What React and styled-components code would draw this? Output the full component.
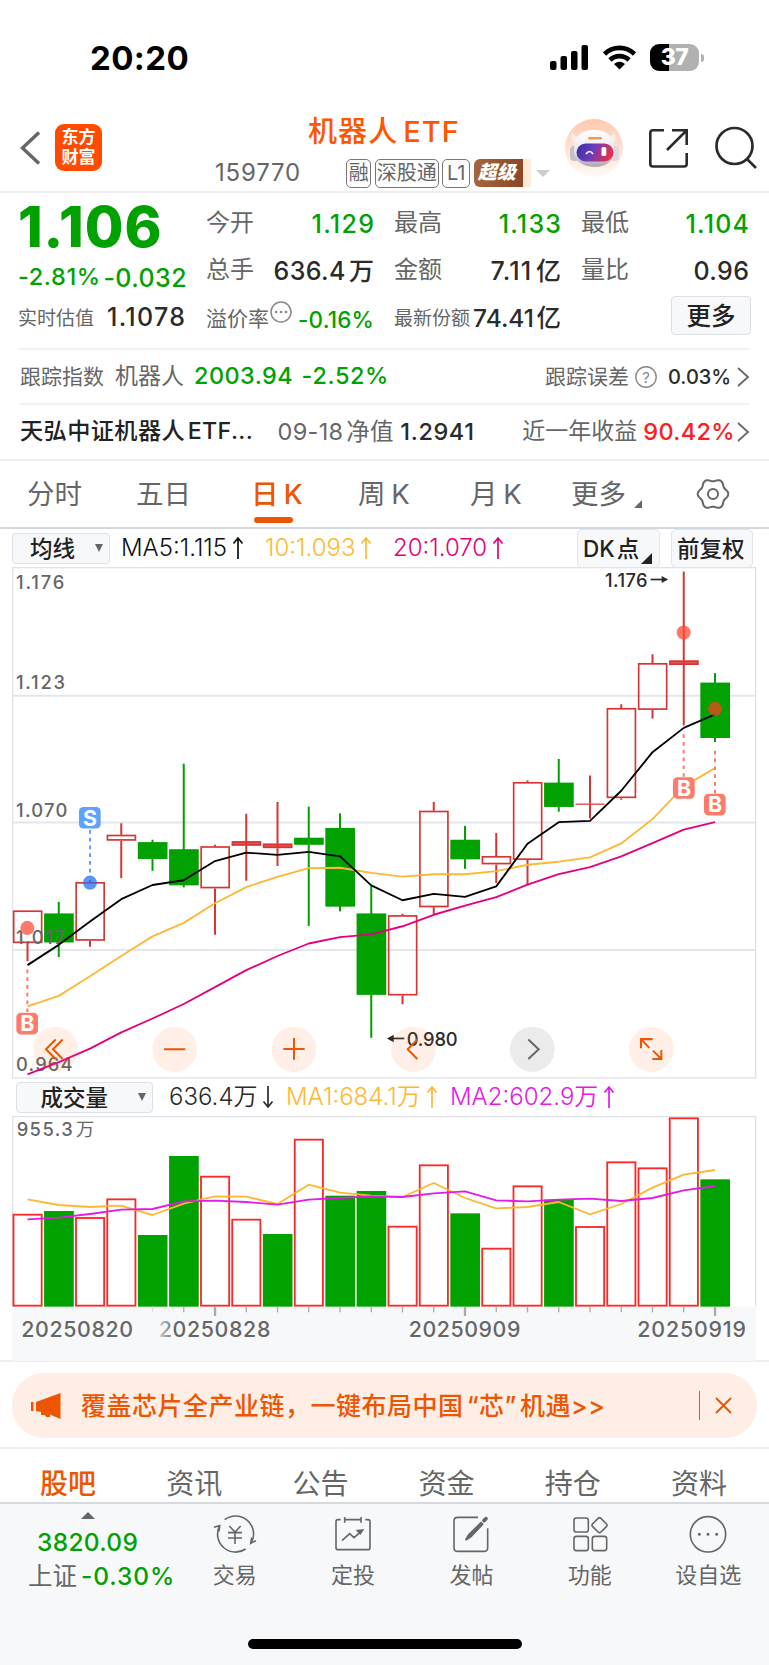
import styled, { createGlobalStyle } from "styled-components";

const GlobalStyle = createGlobalStyle`
  * { box-sizing: border-box; }
  body {
    margin: 0;
    background: #fff;
    font-family: Inter, "Noto Sans CJK SC", sans-serif;
    -webkit-font-smoothing: antialiased;
  }
  svg { display: block; flex: none; overflow: visible; }
`;

const GREEN = "#02a102";
const ORANGE = "#ee5500";
const GRAY = "#666";
const DARK = "#2b2b2b";

const Page = styled.div`
  width: 769px;
  height: 1665px;
  overflow: hidden;
`;
const Text = styled.span`
  flex: none;
  white-space: nowrap;
  line-height: 1.2;
  width: ${(p) => (p.$w ? `${p.$w}px` : "auto")};
  margin-left: ${(p) => p.$ml || 0}px;
  margin-right: ${(p) => -(p.$ls || 0)}px;
  margin-top: ${(p) => p.$mt || 0}px;
  font-size: ${(p) => p.$size || 24}px;
  font-weight: ${(p) => p.$weight || 400};
  letter-spacing: ${(p) => p.$ls || 0}px;
  word-spacing: -4px;
  color: ${(p) => p.$color || GRAY};
`;

/* status bar */
const StatusBar = styled.div`
  height: 100px;
  padding: 0 65px 0 90px;
  display: flex;
  align-items: center;
  justify-content: space-between;
`;
const Clock = styled.div`
  margin-top: 15px;
  font-size: 33px;
  font-weight: 700;
  letter-spacing: 0.4px;
`;
const StatusIcons = styled.div`
  margin-top: 15px;
  display: flex;
  align-items: center;
  gap: 14px;
`;
const Battery = styled.div`
  width: 49px;
  height: 27px;
  border-radius: 9px;
  background: linear-gradient(90deg, #000 38%, #b1b1b1 38%);
  color: #fff;
  font-size: 23px;
  font-weight: 800;
  line-height: 27px;
  text-align: center;
  letter-spacing: -0.5px;
`;
const BatteryGroup = styled.div`
  display: flex;
  align-items: center;
  gap: 2px;
`;
const Nub = styled.div`
  width: 3px;
  height: 8px;
  border-radius: 0 4px 4px 0;
  background: #b1b1b1;
`;

/* header */
const Header = styled.header`
  height: 93px;
  border-bottom: 2px solid #eee;
  display: flex;
  align-items: flex-start;
`;
const BackIcon = styled.svg`
  margin: 31px 0 0 20px;
`;
const Logo = styled.div`
  width: 47px;
  height: 47px;
  margin: 24px 0 0 14px;
  border-radius: 9px;
  background: #ff4a00;
  color: #fff;
  font-size: 17px;
  font-weight: 700;
  line-height: 19.5px;
  padding-top: 4px;
  text-align: center;
`;
const TitleBlock = styled.div`
  width: 462px;
`;
const Title = styled.h1`
  margin: 13px 0 0 206px;
  font-size: 29px;
  font-weight: 500;
  line-height: 38px;
  color: #ff5500;
  letter-spacing: 1.1px;
  word-spacing: -4px;
  white-space: nowrap;
`;
const CodeRow = styled.div`
  display: flex;
  align-items: center;
  margin: 7px 0 0 113px;
  height: 30px;
`;
const Tag = styled.span`
  width: ${(p) => p.$w}px;
  height: 29px;
  margin-right: 3.5px;
  border: 1.5px solid #777;
  border-radius: 5px;
  font-size: 20px;
  line-height: 26px;
  color: ${GRAY};
  text-align: center;
  white-space: nowrap;
  flex: none;
`;
const SuperTag = styled.span`
  width: 57px;
  height: 28px;
  border-radius: 6px 0 0 6px;
  background: linear-gradient(90deg, #a5663c, #8a4626 49px, #f9e6d0 49px, #fdeedd);
  color: #fff;
  font-size: 19px;
  font-style: italic;
  font-weight: 900;
  line-height: 28px;
  padding-left: 4px;
  white-space: nowrap;
  flex: none;
`;
const Caret = styled.i`
  width: 0;
  height: 0;
  margin-left: ${(p) => p.$ml || 0}px;
  border: ${(p) => p.$half}px solid transparent;
  border-top: ${(p) => p.$h}px solid ${(p) => p.$color};
  border-bottom: 0;
`;
const HeaderIcons = styled.div`
  display: flex;
  align-items: center;
  margin-top: 18px;
`;

/* quote summary */
const Summary = styled.section`
  display: flex;
  height: 157px;
  margin: 0 20px 0 19px;
  border-bottom: 2px solid #f2f2f2;
`;
const Main = styled.div`
  width: 187px;
`;
const Price = styled.div`
  height: 63px;
  margin-left: -1px;
  font-size: 56px;
  font-weight: 800;
  line-height: 68px;
  letter-spacing: 0.9px;
  color: ${GREEN};
`;
const Line = styled.div`
  display: flex;
  align-items: center;
  height: ${(p) => p.$h}px;
`;
const Stats = styled.div`
  display: grid;
  grid-template-columns: 168px 167px 168px;
  grid-template-rows: 47px 47px 50px;
  column-gap: 20px;
  padding-top: 7px;
`;
const Stat = styled.div`
  display: flex;
  align-items: center;
  justify-content: space-between;
`;
const HintIcon = styled.svg`
  margin: 0 5px 0 0;
`;
const MoreButton = styled.button`
  width: 80px;
  height: 39px;
  margin: -8px -2px 0 auto;
  flex: none;
  border: 1.5px solid #dcdfe6;
  border-radius: 4px;
  background: #f7f8fa;
  color: #222;
  font: 500 24.5px "Noto Sans CJK SC", sans-serif;
  line-height: 34px;
  padding: 0;
`;
const InfoRow = styled.section`
  display: flex;
  align-items: center;
  height: ${(p) => p.$h}px;
  margin: 0 20px;
  border-bottom: ${(p) => (p.$last ? "none" : "2px solid #f2f2f2")};
`;
const Spacer = styled.div`
  flex: 1;
`;

/* period tabs */
const Tabs = styled.nav`
  display: flex;
  height: 70px;
  border-top: 2px solid #eee;
  border-bottom: 2px solid #d3d6dd;
`;
const Tab = styled.div`
  position: relative;
  flex: none;
  width: ${(p) => p.$w}px;
  padding-left: ${(p) => p.$pl || 0}px;
  font-size: 27.5px;
  line-height: 67px;
  word-spacing: -2px;
  font-weight: ${(p) => (p.$active ? 500 : 400)};
  color: ${(p) => (p.$active ? ORANGE : GRAY)};
  white-space: nowrap;
  &::after {
    content: "";
    display: ${(p) => (p.$active ? "block" : "none")};
    position: absolute;
    left: 3px;
    bottom: 4px;
    width: 39px;
    height: 6px;
    border-radius: 3px;
    background: ${ORANGE};
  }
`;
const Corner = styled.i`
  display: inline-block;
  width: 0;
  height: 0;
  margin-left: ${(p) => p.$ml}px;
  margin-top: ${(p) => p.$mt || 0}px;
  vertical-align: ${(p) => p.$drop || 0}px;
  border-left: ${(p) => p.$s}px solid transparent;
  border-bottom: ${(p) => p.$s}px solid ${(p) => p.$color};
`;

/* indicator bars */
const Toolbar = styled.div`
  display: flex;
  align-items: center;
  height: 38px;
  padding-left: ${(p) => p.$pl}px;
`;
const Select = styled.div`
  display: flex;
  align-items: center;
  justify-content: flex-end;
  flex: none;
  width: ${(p) => p.$w}px;
  height: 31px;
  padding-right: 6px;
  border: 1.5px solid #dde0e6;
  border-radius: 4px;
  background: #f7f8fa;
`;
const Indicator = styled.div`
  display: flex;
  align-items: center;
  gap: 6px;
  flex: none;
  width: ${(p) => p.$w}px;
  margin-left: ${(p) => p.$ml || 0}px;
  font-size: 24px;
  font-weight: 350;
  line-height: 30px;
  white-space: nowrap;
  color: ${(p) => p.$color};
`;
const ToggleButton = styled.div`
  flex: none;
  display: flex;
  align-items: center;
  width: ${(p) => p.$w}px;
  height: 39px;
  margin-left: ${(p) => p.$ml}px;
  padding-left: 5px;
  border: 1.5px solid #e2e4ea;
  border-radius: 5px;
  background: #f7f8fa;
`;
const PlotBox = styled.div`
  margin-left: 12px;
`;

/* banner */
const BannerWrap = styled.div`
  height: 89px;
  padding: 11px 12px 0;
  border-top: 2px solid #eee;
  border-bottom: 2px solid #eee;
`;
const Banner = styled.div`
  display: flex;
  align-items: center;
  height: 65px;
  border-radius: 32px;
  background: #feeee5;
  padding: 0 25px 0 18px;
`;
const Divider = styled.div`
  width: 1.5px;
  height: 29px;
  margin-right: 15px;
  background: ${ORANGE};
`;

/* section tabs and bottom bar */
const SectionTabs = styled.nav`
  display: flex;
  height: 55px;
  padding: 0 7px 0 5px;
  border-bottom: 2px solid #d6d9de;
`;
const SectionTab = styled.div`
  flex: 1;
  text-align: center;
  font-size: 28px;
  line-height: 71px;
  font-weight: ${(p) => (p.$active ? 500 : 400)};
  color: ${(p) => (p.$active ? ORANGE : GRAY)};
`;
const BottomBar = styled.footer`
  height: 161px;
  background: #f7f8fa;
  display: flex;
  flex-direction: column;
  align-items: center;
`;
const BottomRow = styled.div`
  display: flex;
  align-self: stretch;
  height: 135px;
`;
const IndexBox = styled.div`
  width: 175.5px;
  display: flex;
  flex-direction: column;
`;
const UpMark = styled.i`
  width: 0;
  margin: 8px 0 9px 81px;
  border: 7px solid transparent;
  border-bottom: 7px solid ${GRAY};
  border-top: 0;
`;
const NavItem = styled.div`
  width: 118.4px;
  display: flex;
  flex-direction: column;
  align-items: center;
  padding-top: 10px;
  gap: 6px;
  font-size: 22px;
  line-height: 30px;
  color: ${GRAY};
`;
const HomeIndicator = styled.div`
  width: 274px;
  height: 10px;
  border-radius: 5px;
  background: #000;
`;

// candle: [high, bodyTop, bodyBottom, low, rising]
const CANDLES = [
  [1037, 1037, 1134, 1187, 1], [1012, 1046, 1132, 1175, 0], [948, 953, 1127, 1145, 1],
  [779, 813, 831, 941, 1], [828, 835, 885, 920, 0], [603, 856, 963, 969, 0],
  [843, 847, 972, 1109, 1], [751, 832, 846, 949, 1], [716, 839, 853, 906, 1],
  [730, 822, 843, 1083, 0], [750, 793, 1026, 1040, 0], [963, 1046, 1287, 1414, 0],
  [1047, 1051, 1289, 1315, 1], [716, 742, 1028, 1048, 1], [787, 828, 886, 914, 0],
  [808, 876, 901, 956, 1], [653, 657, 888, 961, 1], [589, 659, 731, 745, 0],
  [638, 720, 725, 765, 1], [427, 438, 705, 710, 1], [279, 305, 444, 469, 1],
  [34, 297, 311, 490, 1], [335, 363, 527, 539, 0],
];
const MA5 = [1199, 1139, 1070, 1004, 962, 948, 891, 866, 873, 864, 877, 963, 1007, 988, 997, 966, 840, 776, 772, 683, 569, 497, 457];
const MA10 = [1321, 1290, 1232, 1172, 1114, 1074, 1016, 968, 938, 912, 911, 926, 937, 930, 930, 921, 902, 893, 880, 839, 767, 670, 616];
const MA20 = [1522, 1486, 1446, 1398, 1357, 1314, 1264, 1214, 1172, 1135, 1116, 1108, 1084, 1050, 1023, 998, 961, 930, 909, 877, 838, 798, 776];
const VOLUMES = [431, 423, 441, 385, 495, 258, 317, 446, 492, 206, 377, 363, 467, 283, 430, 533, 346, 389, 468, 274, 292, 142, 328];
const FALLING_VOLUMES = [1, 4, 5, 8, 10, 11, 14, 17, 22];
const VMA1 = [388, 405, 411, 407, 435, 401, 379, 380, 402, 344, 368, 377, 381, 339, 384, 415, 411, 396, 433, 402, 353, 314, 300];
const VMA2 = [448, 443, 432, 419, 417, 394, 392, 396, 404, 389, 384, 379, 381, 370, 364, 391, 394, 389, 386, 393, 384, 361, 348];

const cx = (i) => 82.5 + i * 93.75;
const points = (list) => list.map((y, i) => `${cx(i)},${y}`).join(" ");

function Label({ x, y, w, size = 55, color = GRAY, weight = 500, children }) {
  return (
    <text x={x} y={y} textLength={w} fontSize={size} fill={color} fontWeight={weight}>
      {children}
    </text>
  );
}

function Candle({ i, data }) {
  const [high, top, bottom, low, rising] = data;
  const x = cx(i);
  if (!rising) {
    return (
      <g fill={GREEN}>
        <rect x={x - 3} y={high} width="6" height={low - high} />
        <rect x={x - 44} y={top} width="89" height={bottom - top} />
      </g>
    );
  }
  const thin = bottom - top < 16;
  return (
    <g stroke="#d93434" strokeWidth="5" fill="none">
      <path d={`M${x} ${high}V${top}M${x} ${bottom}V${low}`} strokeWidth="6" />
      <rect
        x={x - 41.5}
        y={top + 2.5}
        width="84"
        height={Math.max(bottom - top - 5, 0.5)}
        fill={thin ? "#dd5555" : "none"}
        strokeWidth={bottom - top < 6 ? 3 : 5}
      />
      {thin && <path d={`M${x} ${top}V${bottom}`} />}
    </g>
  );
}

function Marker({ x, y, color, letter }) {
  return (
    <g>
      <rect x={x - 33} y={y - 32} width="65" height="64" rx="13" fill={color} />
      <text x={x} y={y + 23} fontSize="64" fontWeight="700" fill="#fff" textAnchor="middle">
        {letter}
      </text>
    </g>
  );
}

function CandleChart() {
  const red = "#ff7a68";
  const blue = "#5ea2fb";
  return (
    <svg width="744" height="511" viewBox="36 21 2232 1512" preserveAspectRatio="none">
      <rect x="38" y="23" width="2229" height="1510" fill="none" stroke="#dfe2e6" strokeWidth="4" />
      <path d="M38 402H2267M38 777H2267M38 1154H2267" stroke="#e2e6ed" strokeWidth="6" />
      {CANDLES.map((data, i) => (
        <Candle key={i} i={i} data={data} />
      ))}
      <Label x="48" y="85" w="145">1.176</Label>
      <Label x="48" y="382" w="147">1.123</Label>
      <Label x="48" y="760" w="154">1.070</Label>
      <Label x="48" y="1136" w="146">1.017</Label>
      <Label x="48" y="1512" w="170">0.964</Label>
      <g fill="none" strokeWidth="5.5" strokeLinejoin="round">
        <polyline points={points(MA20)} stroke="#e2007f" />
        <polyline points={points(MA10)} stroke="#fdb833" />
        <polyline points={points(MA5)} stroke="#000" />
      </g>
      <g strokeWidth="6" strokeDasharray="11 12">
        <path d="M270 799V930" stroke={blue} />
        <path d="M82 1212V1338M2051 516V642M2145 565V692" stroke={red} />
      </g>
      <circle cx="270" cy="955" r="21" fill="#2672f0" fillOpacity=".75" />
      <circle cx="82" cy="1089" r="21" fill="#ff7a68" />
      <circle cx="2051" cy="215" r="21" fill="#ff4a38" fillOpacity=".75" />
      <circle cx="2145" cy="441" r="21" fill="#ed4620" fillOpacity=".75" />
      <Marker x={270} y={763} color={blue} letter="S" />
      <Marker x={82} y={1372} color={red} letter="B" />
      <Marker x={2052} y={675} color={red} letter="B" />
      <Marker x={2145} y={724} color={red} letter="B" />
      <Label x="1815" y="79" w="128" color={DARK}>1.176</Label>
      <path d="M1952 58H2000" stroke={DARK} strokeWidth="5" />
      <path d="M2004 58L1985 48V68Z" fill={DARK} />
      <Label x="1220" y="1437" w="153" color={DARK}>0.980</Label>
      <path d="M1166 1416H1213" stroke={DARK} strokeWidth="5" />
      <path d="M1161 1416L1181 1405V1427Z" fill={DARK} />
      <g fill="#ff6a1a" fillOpacity=".11">
        <circle cx="167" cy="1448" r="67" />
        <circle cx="524" cy="1448" r="67" />
        <circle cx="882" cy="1448" r="67" />
        <circle cx="1240" cy="1448" r="67" />
        <circle cx="1597" cy="1448" r="67" fill="#000" fillOpacity=".08" />
        <circle cx="1954" cy="1448" r="67" />
      </g>
      <g fill="none" stroke={ORANGE} strokeWidth="6">
        <path d="M167 1419L138 1448L167 1477M188 1419L159 1448L188 1477" />
        <path d="M492 1448H556M850 1447H914M882 1415V1479" />
        <path d="M1252 1419L1223 1448L1252 1477" />
        <path d="M1585 1419L1616 1448L1585 1477" stroke="#666" />
        <path d="M1923 1445V1418H1958M1923 1418L1948 1444M1984 1450V1477H1957M1984 1477L1959 1452" />
      </g>
    </svg>
  );
}

function VolumeChart() {
  return (
    <svg width="744" height="244" viewBox="36 138 2232 732">
      <defs>
        <linearGradient id="fade">
          <stop offset="0" stopColor="#f7f8fa" />
          <stop offset=".6" stopColor="#f7f8fa" stopOpacity=".75" />
          <stop offset="1" stopColor="#f7f8fa" stopOpacity="0" />
        </linearGradient>
      </defs>
      <path d="M38 708V140H2267V708" fill="none" stroke="#dfe2e6" strokeWidth="4" />
      <rect x="36" y="710" width="2232" height="162" fill="#f7f8fa" />
      <Label x="50" y="198" w="168">955.3</Label>
      <Label x="228" y="198" weight="400">万</Label>
      {VOLUMES.map((top, i) =>
        FALLING_VOLUMES.includes(i) ? (
          <rect key={i} x={cx(i) - 44} y={top} width="89" height={710 - top} fill={GREEN} />
        ) : (
          <rect key={i} x={cx(i) - 42} y={top + 3} width="84.5" height={704 - top} fill="none" stroke="#fa2828" strokeWidth="5.5" />
        )
      )}
      <g fill="none" strokeWidth="5.5" strokeLinejoin="round">
        <polyline points={points(VMA1)} stroke="#fdb833" />
        <polyline points={points(VMA2)} stroke="#e619e6" />
      </g>
      {VOLUMES.map((_, i) => {
        const major = i === 6 || i === 14 || i === 22;
        return i > 3 ? (
          <path key={i} d={`M${cx(i)} 710V${major ? 738 : 727}`} stroke={i === 4 ? "#ddd" : "#aaa"} strokeWidth={major ? 7 : 4} />
        ) : null;
      })}
      <Label x="476" y="802" w="335" size="64">20250828</Label>
      <rect x="400" y="740" width="125" height="90" fill="url(#fade)" />
      <Label x="64" y="802" w="335" size="64">20250820</Label>
      <Label x="1226" y="802" w="335" size="64">20250909</Label>
      <Label x="1912" y="802" w="326" size="64">20250919</Label>
    </svg>
  );
}

function Arrow({ down }) {
  return (
    <svg width="10" height="22" viewBox="0 0 10 22" fill="none" stroke="currentColor" strokeWidth="1.7">
      <path d={down ? "M5 0V21M0.500 15.500L5 21L9.500 15.500" : "M5 22V1M0.500 6.500L5 1L9.500 6.500"} />
    </svg>
  );
}

function Chevron() {
  return (
    <svg width="12" height="20" viewBox="0 0 12 20" fill="none" stroke="#666" strokeWidth="1.8">
      <path d="M1 1L11 10L1 19" />
    </svg>
  );
}

function Robot() {
  return (
    <svg width="60" height="60" viewBox="0 0 60 60">
      <defs>
        <linearGradient id="halo" x2="0" y2="1">
          <stop offset="0" stopColor="#ffc9ad" />
          <stop offset="1" stopColor="#fffaf7" />
        </linearGradient>
        <linearGradient id="visor" x2="1" y2=".25">
          <stop offset="0" stopColor="#33309f" />
          <stop offset=".5" stopColor="#6b3bc0" />
          <stop offset="1" stopColor="#e5304f" />
        </linearGradient>
        <linearGradient id="helmet" x2="0" y2="1">
          <stop offset="0" stopColor="#fff" />
          <stop offset=".6" stopColor="#e9e5ea" />
          <stop offset="1" stopColor="#aaa5b2" />
        </linearGradient>
      </defs>
      <circle cx="30" cy="30" r="29" fill="url(#halo)" />
      <path d="M8 14Q5 24 14 26L19 18Q10 20 8 14ZM50 14Q54 24 46 26L41 18Q49 20 50 14Z" fill="#f6eeee" />
      <rect x="6" y="28" width="9" height="15" rx="4" fill="#c5bfca" />
      <rect x="46" y="28" width="9" height="15" rx="4" fill="#ddd8df" />
      <path d="M10 30Q11 12 30 12T50 30Q51 48 31 49Q9 48 10 30Z" fill="url(#helmet)" />
      <rect x="24" y="19" width="14" height="2.600" rx="1.300" fill="#ee9a5a" />
      <rect x="12.500" y="25.500" width="37" height="18" rx="9" fill="url(#visor)" />
      <path d="M22 36q3.500-5 7 0" fill="none" stroke="#fff" strokeWidth="1.700" />
      <rect x="37.500" y="29" width="4.800" height="9" rx="1.500" fill="#fff" />
    </svg>
  );
}

const gearPath = Array.from({ length: 73 }, (_, i) => {
  const a = (i * Math.PI) / 36;
  const r = 14 + 1.3 * Math.cos(6 * a);
  return `${i ? "L" : "M"}${(16 + r * Math.cos(a)).toFixed(2)} ${(16 + r * Math.sin(a)).toFixed(2)}`;
}).join("");

const NAV = [
  {
    name: "交易",
    icon: (
      <>
        <path d="M29 17A54 54 0 0 1 111 82M92 105A54 54 0 0 1 13 37" />
        <path d="M-3 40L14 35L12 52M123 80L107 88L110 71M43 36L60 54L77 36M60 54V90M39 56H81M39 72H81" />
      </>
    ),
  },
  {
    name: "定投",
    icon: (
      <>
        <path d="M23 17H15Q9 17 9 23V101Q9 107 15 107H105Q111 107 111 101V23Q111 17 105 17H97M35 9V26M84 9V26M35 17H84M27 80L50 59L63 71L84 53" />
        <path d="M68 48L94 45L82 63Z" fill={GRAY} stroke="none" />
      </>
    ),
  },
  {
    name: "发帖",
    icon: (
      <>
        <path d="M81 10H20Q9 10 9 21V101Q9 112 20 112H99Q110 112 110 101V43" />
        <path d="M44 78L53 62L90 26L95 31L60 68Z" fill={GRAY} />
        <path d="M99 20L105 14" strokeWidth="11" strokeLinecap="round" />
      </>
    ),
  },
  {
    name: "功能",
    icon: (
      <>
        <rect x="12" y="12" width="43" height="42" rx="7" />
        <rect x="12" y="67" width="43" height="43" rx="7" />
        <rect x="67" y="67" width="43" height="43" rx="7" />
        <rect x="71" y="16" width="35" height="35" rx="6" transform="rotate(45 88.500 33.500)" />
      </>
    ),
  },
  {
    name: "设自选",
    icon: (
      <>
        <circle cx="60" cy="61" r="53" />
        <path d="M34 61h.1M60 61h.1M86 61h.1" strokeWidth="9" strokeLinecap="round" />
      </>
    ),
  },
];

export default function App() {
  return (
    <Page>
      <GlobalStyle />
      <StatusBar>
        <Clock>20:20</Clock>
        <StatusIcons>
          <svg width="39" height="25" viewBox="0 0 39 25">
            <rect x="0" y="16" width="6.500" height="9" rx="2" />
            <rect x="10.500" y="11" width="6.500" height="14" rx="2" />
            <rect x="21" y="6" width="6.500" height="19" rx="2" />
            <rect x="31.500" y="0" width="6.500" height="25" rx="2" />
          </svg>
          <svg width="33" height="25" viewBox="0 0 33 25" fill="none" stroke="#000" strokeWidth="4.600">
            <path d="M1.500 9A21.500 21.500 0 0 1 31.500 9M7 15A13.500 13.500 0 0 1 26 15" />
            <path d="M16.500 24.500L11 19Q16.500 14.500 22 19Z" fill="#000" stroke="none" />
          </svg>
          <BatteryGroup>
            <Battery>37</Battery>
            <Nub />
          </BatteryGroup>
        </StatusIcons>
      </StatusBar>

      <Header>
        <BackIcon width="21" height="34" viewBox="0 0 21 34" fill="none" stroke="#666" strokeWidth="3.400">
          <path d="M19 1.500L2.500 17L19 32.500" />
        </BackIcon>
        <Logo>
          东方
          <br />
          财富
        </Logo>
        <TitleBlock>
          <Title>机器人 ETF</Title>
          <CodeRow>
            <Text $w={132} $size={24} $ls={0.8}>159770</Text>
            <Tag $w={25}>融</Tag>
            <Tag $w={64}>深股通</Tag>
            <Tag $w={28}>L1</Tag>
            <SuperTag>超级</SuperTag>
            <Caret $half={7} $h={7} $ml={5} $color="#ccc" />
          </CodeRow>
        </TitleBlock>
        <HeaderIcons>
          <Robot />
          <svg width="92" height="60" viewBox="-25 -11 92 60" fill="none" stroke="#2b2b2b" strokeWidth="2.600">
            <path d="M15 1.300H4Q1.300 1.300 1.300 4V35Q1.300 37.500 4 37.500H35Q37.700 37.500 37.700 35V24M23 1.300H37.700V16M37 2L18 21" />
          </svg>
          <svg width="42" height="42" viewBox="0 0 42 42" fill="none" stroke="#2b2b2b" strokeWidth="2.700">
            <circle cx="18.500" cy="19" r="18" />
            <path d="M31 32L40 41" />
          </svg>
        </HeaderIcons>
      </Header>

      <Summary>
        <Main>
          <Price>1.106</Price>
          <Line $h={43}>
            <Text $w={86} $ml={-1} $size={23.5} $weight={500} $color={GREEN} $ls={0.6}>-2.81%</Text>
            <Text $size={25} $weight={500} $color={GREEN} $ls={0.4}>-0.032</Text>
          </Line>
          <Line $h={38}>
            <Text $w={89} $ml={-1} $size={19} $mt={2}>实时估值</Text>
            <Text $size={25} $weight={500} $color={DARK} $mt={-2} $ls={1.3}>1.1078</Text>
          </Line>
        </Main>
        <Stats>
          <Stat>
            <Text>今开</Text>
            <Text $weight={500} $size={25} $color={GREEN} $ls={1.3}>1.129</Text>
          </Stat>
          <Stat>
            <Text>最高</Text>
            <Text $weight={500} $size={25} $color={GREEN} $ls={1.2}>1.133</Text>
          </Stat>
          <Stat>
            <Text>最低</Text>
            <Text $weight={500} $size={25} $color={GREEN} $ls={1.2}>1.104</Text>
          </Stat>
          <Stat>
            <Text>总手</Text>
            <Text $weight={500} $size={25} $color={DARK} $ls={0.4}>636.4 万</Text>
          </Stat>
          <Stat>
            <Text>金额</Text>
            <Text $weight={500} $size={25} $color={DARK} $ls={1.1}>7.11 亿</Text>
          </Stat>
          <Stat>
            <Text>量比</Text>
            <Text $weight={500} $size={25} $color={DARK} $ls={0.4}>0.96</Text>
          </Stat>
          <Stat>
            <Text $size={21}>溢价率</Text>
            <HintIcon width="22" height="36" viewBox="0 0 22 36" fill="none" stroke="#888">
              <circle cx="11" cy="11" r="10" strokeWidth="1.500" />
              <path d="M6 11h.1M11 11h.1M16 11h.1" strokeWidth="2.500" strokeLinecap="round" />
            </HintIcon>
            <Text $size={22.5} $weight={500} $color={GREEN} $ls={0.2}>-0.16%</Text>
          </Stat>
          <Stat>
            <Text $size={19}>最新份额</Text>
            <Text $size={24.5} $weight={500} $color={DARK}>74.41 亿</Text>
          </Stat>
          <Stat>
            <MoreButton>更多</MoreButton>
          </Stat>
        </Stats>
      </Summary>

      <InfoRow $h={55}>
        <Text $w={95} $size={21}>跟踪指数</Text>
        <Text $w={79} $size={23}>机器人</Text>
        <Text $w={108} $size={23.5} $weight={500} $color={GREEN} $ls={0.4}>2003.94</Text>
        <Text $size={23.5} $weight={500} $color={GREEN} $ls={0.6}>-2.52%</Text>
        <Spacer />
        <Text $w={90} $size={21}>跟踪误差</Text>
        <svg width="22" height="22" viewBox="0 0 22 22">
          <circle cx="11" cy="11" r="10.200" fill="none" stroke="#888" strokeWidth="1.400" />
          <text x="11" y="16.500" fontSize="15" textAnchor="middle" fill="#888">?</text>
        </svg>
        <Text $w={69} $ml={11} $size={20} $weight={500} $color={DARK}>0.03%</Text>
        <Chevron />
      </InfoRow>
      <InfoRow $h={54} $last>
        <Text $w={258} $size={23.2} $weight={500} $color="#222" $ls={0.4}>天弘中证机器人 ETF...</Text>
        <Text $w={123} $size={23.5} $ls={0.3}>09-18 净值</Text>
        <Text $size={23.5} $weight={500} $color={DARK} $ls={0.6}>1.2941</Text>
        <Spacer />
        <Text $w={121} $size={23}>近一年收益</Text>
        <Text $w={94} $size={23.5} $weight={500} $color="#fa2020" $ls={0.3}>90.42%</Text>
        <Chevron />
      </InfoRow>

      <Tabs>
        <Tab $w={136} $pl={27}>分时</Tab>
        <Tab $w={115}>五日</Tab>
        <Tab $w={107} $active>日 K</Tab>
        <Tab $w={112}>周 K</Tab>
        <Tab $w={101}>月 K</Tab>
        <Tab $w={126}>
          更多
          <Corner $ml={8} $s={8} $drop={-4} $color={GRAY} />
        </Tab>
        <svg width="32" height="66" viewBox="0 -17 32 66" fill="none" stroke="#666" strokeWidth="2">
          <path d={gearPath} />
          <circle cx="16" cy="16" r="5" />
        </svg>
      </Tabs>

      <Toolbar $pl={12}>
        <Select $w={98}>
          <Text $size={22.5} $weight={500} $color="#222">均线</Text>
          <Caret $half={4.5} $h={8} $ml={20} $color={GRAY} />
        </Select>
        <Indicator $w={144} $ml={11} $color="#111">
          MA5:1.115
          <Arrow />
        </Indicator>
        <Indicator $w={128} $color="#fdb833">
          10:1.093
          <Arrow />
        </Indicator>
        <Indicator $w={112} $color="#e2007f">
          20:1.070
          <Arrow />
        </Indicator>
        <ToggleButton $w={83} $ml={72}>
          <Text $size={22.5} $weight={500} $color="#222">DK 点</Text>
          <Corner $ml={2} $mt={20} $s={11} $color="#222" />
        </ToggleButton>
        <ToggleButton $w={82} $ml={11}>
          <Text $size={22.5} $weight={500} $color="#222">前复权</Text>
        </ToggleButton>
      </Toolbar>
      <PlotBox>
        <CandleChart />
      </PlotBox>

      <Toolbar $pl={16}>
        <Select $w={137}>
          <Text $size={22.5} $weight={500} $color="#222">成交量</Text>
          <Caret $half={4.5} $h={8} $ml={30} $color={GRAY} />
        </Select>
        <Indicator $w={117} $ml={16} $color={DARK}>
          636.4万
          <Arrow down />
        </Indicator>
        <Indicator $w={164} $color="#fdb833">
          MA1:684.1万
          <Arrow />
        </Indicator>
        <Indicator $w={164} $color="#e619e6">
          MA2:602.9万
          <Arrow />
        </Indicator>
      </Toolbar>
      <PlotBox>
        <VolumeChart />
      </PlotBox>

      <BannerWrap>
        <Banner>
          <svg width="32" height="26" viewBox="0 0 32 26" fill={ORANGE}>
            <path d="M1 9H3.500V18H1ZM6 9L30.500 0V26L20 21.500V24L16 24L15 22L11 22V19L6 18Z" />
          </svg>
          <Text $ml={19} $size={25} $weight={500} $color={ORANGE} $ls={0.5}>覆盖芯片全产业链，一键布局中国 “芯” 机遇&gt;&gt;</Text>
          <Spacer />
          <Divider />
          <svg width="17" height="17" viewBox="0 0 17 17" stroke={ORANGE} strokeWidth="2">
            <path d="M1 1L16 16M16 1L1 16" />
          </svg>
        </Banner>
      </BannerWrap>

      <SectionTabs>
        {["股吧", "资讯", "公告", "资金", "持仓", "资料"].map((name, i) => (
          <SectionTab key={name} $active={i === 0}>{name}</SectionTab>
        ))}
      </SectionTabs>
      <BottomBar>
        <BottomRow>
          <IndexBox>
            <UpMark />
            <Text $ml={37} $size={24.5} $weight={500} $color={GREEN} $ls={0.3}>3820.09</Text>
            <Line $h={39}>
              <Text $w={53} $ml={28} $size={24.5}>上证</Text>
              <Text $size={24.5} $weight={500} $color={GREEN} $ls={0.9}>-0.30%</Text>
            </Line>
          </IndexBox>
          {NAV.map(({ name, icon }) => (
            <NavItem key={name}>
              <svg width="40" height="40" viewBox="0 0 120 120" fill="none" stroke={GRAY} strokeWidth="4.800">
                {icon}
              </svg>
              {name}
            </NavItem>
          ))}
        </BottomRow>
        <HomeIndicator />
      </BottomBar>
    </Page>
  );
}
